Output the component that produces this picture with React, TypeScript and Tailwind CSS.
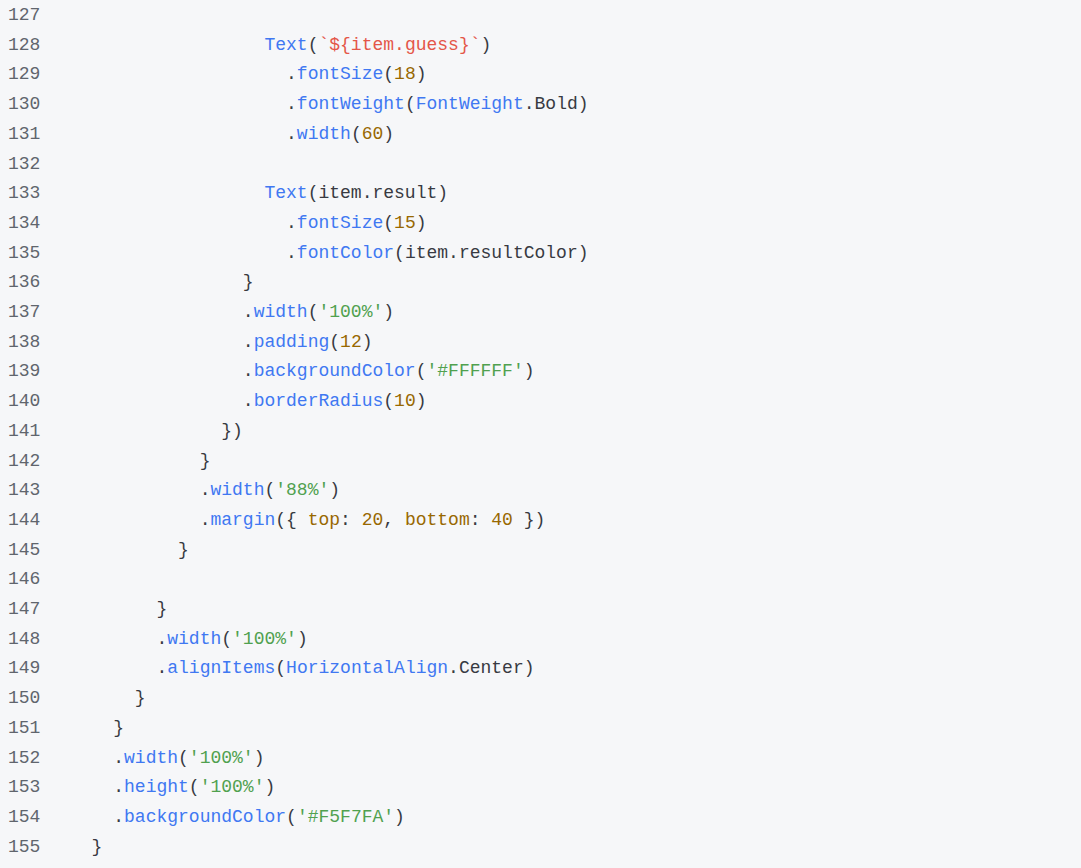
import React from "react";

type Seg = [string, string];

const D = "text-[#383a42]";
const B = "text-[#4078f2]";
const R = "text-[#e45649]";
const G = "text-[#50a14f]";
const O = "text-[#986801]";

const sp = (n: number): Seg => [" ".repeat(n), D];

const lines: Seg[][] = [
  [],
  [sp(18), ["Text", B], ["(", D], ["`${item.guess}`", R], [")", D]],
  [sp(20), [".", D], ["fontSize", B], ["(", D], ["18", O], [")", D]],
  [sp(20), [".", D], ["fontWeight", B], ["(", D], ["FontWeight", B], [".Bold)", D]],
  [sp(20), [".", D], ["width", B], ["(", D], ["60", O], [")", D]],
  [],
  [sp(18), ["Text", B], ["(item.result)", D]],
  [sp(20), [".", D], ["fontSize", B], ["(", D], ["15", O], [")", D]],
  [sp(20), [".", D], ["fontColor", B], ["(item.resultColor)", D]],
  [sp(16), ["}", D]],
  [sp(16), [".", D], ["width", B], ["(", D], ["'100%'", G], [")", D]],
  [sp(16), [".", D], ["padding", B], ["(", D], ["12", O], [")", D]],
  [sp(16), [".", D], ["backgroundColor", B], ["(", D], ["'#FFFFFF'", G], [")", D]],
  [sp(16), [".", D], ["borderRadius", B], ["(", D], ["10", O], [")", D]],
  [sp(14), ["})", D]],
  [sp(12), ["}", D]],
  [sp(12), [".", D], ["width", B], ["(", D], ["'88%'", G], [")", D]],
  [
    sp(12),
    [".", D],
    ["margin", B],
    ["({ ", D],
    ["top", O],
    [": ", D],
    ["20", O],
    [", ", D],
    ["bottom", O],
    [": ", D],
    ["40", O],
    [" })", D],
  ],
  [sp(10), ["}", D]],
  [],
  [sp(8), ["}", D]],
  [sp(8), [".", D], ["width", B], ["(", D], ["'100%'", G], [")", D]],
  [sp(8), [".", D], ["alignItems", B], ["(", D], ["HorizontalAlign", B], [".Center)", D]],
  [sp(6), ["}", D]],
  [sp(4), ["}", D]],
  [sp(4), [".", D], ["width", B], ["(", D], ["'100%'", G], [")", D]],
  [sp(4), [".", D], ["height", B], ["(", D], ["'100%'", G], [")", D]],
  [sp(4), [".", D], ["backgroundColor", B], ["(", D], ["'#F5F7FA'", G], [")", D]],
  [sp(2), ["}", D]],
];

const App: React.FC = () => {
  return (
    <div className="w-[1081px] h-[868px] overflow-hidden bg-[#f6f7f9] font-['Liberation_Mono',monospace] text-[18px] leading-[29.7px]">
      <div className="mt-[1px]">
        {lines.map((segs, i) => (
          <div key={i} className="flex whitespace-pre">
            <span className="w-[70px] shrink-0 pl-2 text-[#60656d]">{127 + i}</span>
            <span>
              {segs.map(([t, c], j) => (
                <span key={j} className={c}>
                  {t}
                </span>
              ))}
            </span>
          </div>
        ))}
      </div>
    </div>
  );
};

export default App;
